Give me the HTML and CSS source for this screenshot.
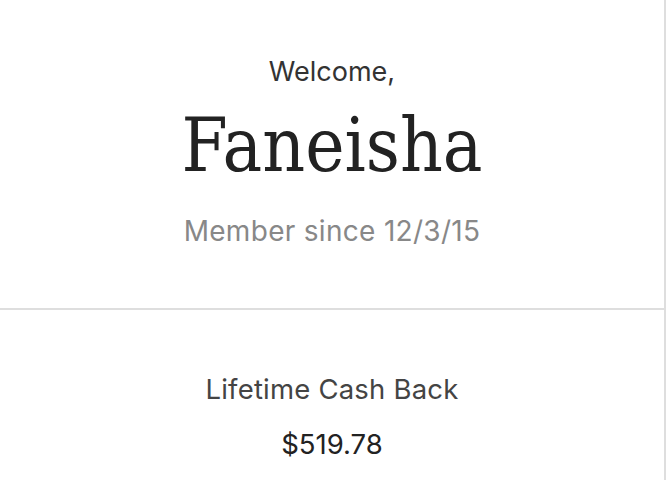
FILE: index.html
```html
<!DOCTYPE html>
<html>
<head>
<meta charset="utf-8">
<link rel="stylesheet" href="styles.css">
</head>
<body>
<div class="panel">
  <section class="welcome">
    <div class="greet">Welcome,</div>
    <div class="name">Faneisha</div>
    <div class="since">Member since 12/3/15</div>
  </section>
  <section class="cash">
    <div class="cash-label">Lifetime Cash Back</div>
    <div class="cash-value">$519.78</div>
  </section>
</div>
</body>
</html>
```
FILE: styles.css
```css
html, body {
  margin: 0;
  padding: 0;
  background: #fff;
}
.panel {
  width: 664px;
  height: 480px;
  border-right: 2px solid #dedede;
  font-family: Inter, Roboto, "Liberation Sans", sans-serif;
  text-align: center;
}
.welcome {
  height: 310px;
  border-bottom: 2px solid #dedede;
  display: flex;
  flex-direction: column;
  align-items: center;
  padding-top: 56px;
  box-sizing: border-box;
}
.greet {
  font-size: 27px;
  line-height: 32px;
  color: #333;
}
.name {
  font-family: "DejaVu Serif Condensed", "DejaVu Serif", serif;
  font-stretch: condensed;
  font-size: 74px;
  line-height: 90px;
  color: #222;
  margin-top: 12px;
}
.since {
  font-size: 28px;
  line-height: 32px;
  letter-spacing: 0.3px;
  color: #888;
  margin-top: 25px;
}
.cash {
  display: flex;
  flex-direction: column;
  align-items: center;
  padding-top: 62px;
}
.cash-label {
  font-size: 27.5px;
  line-height: 34px;
  letter-spacing: 0.2px;
  color: #444;
}
.cash-value {
  font-size: 27.5px;
  line-height: 34px;
  color: #222;
  margin-top: 21px;
}
```
